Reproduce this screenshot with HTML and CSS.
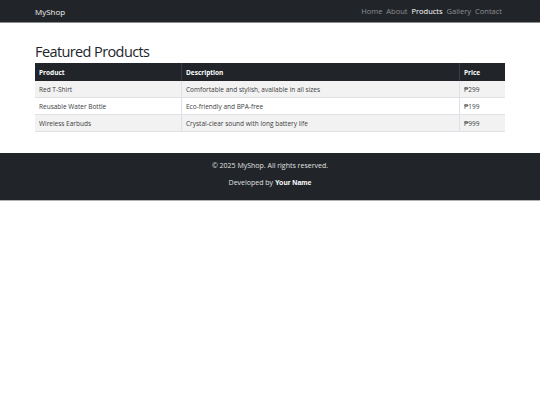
FILE: index.html
```html
<!DOCTYPE html>
<html>
<head>
    <meta charset="UTF-8"/>
    <title>MyShop - Products</title>
    <link rel="stylesheet" href="styles.css">
</head>
<body>
<header class="navbar">
    <div class="container nav-inner">
        <a href="#" class="brand">MyShop</a>
        <nav class="nav-links">
            <a href="#">Home</a>
            <a href="#">About</a>
            <a href="#" class="active">Products</a>
            <a href="#">Gallery</a>
            <a href="#">Contact</a>
        </nav>
    </div>
</header>

<main class="container main">
    <h1>Featured Products</h1>
    <table class="products">
        <thead>
        <tr>
            <th class="col-product">Product</th>
            <th>Description</th>
            <th class="col-price">Price</th>
        </tr>
        </thead>
        <tbody>
        <tr>
            <td>Red T-Shirt</td>
            <td>Comfortable and stylish, available in all sizes</td>
            <td>₱299</td>
        </tr>
        <tr>
            <td>Reusable Water Bottle</td>
            <td>Eco-friendly and BPA-free</td>
            <td>₱199</td>
        </tr>
        <tr>
            <td>Wireless Earbuds</td>
            <td>Crystal-clear sound with long battery life</td>
            <td>₱999</td>
        </tr>
        </tbody>
    </table>
</main>

<footer class="footer">
    <p>&copy; 2025 MyShop. All rights reserved.</p>
    <p>Developed by <strong>Your Name</strong></p>
</footer>
</body>
</html>
```

FILE: styles.css
```css
body {
    margin: 0;
    font-family: "Open Sans", sans-serif;
    color: #212529;
    background: #fff;
}

.container {
    width: 470px;
    margin: 0 auto;
}

.navbar {
    background: #212529;
    height: 22px;
    border-bottom: 1px solid #8a8c8e;
}

.nav-inner {
    display: flex;
    justify-content: space-between;
    align-items: center;
    height: 100%;
}

.brand {
    color: #f1f1f1;
    text-decoration: none;
    font-size: 8px;
}

.nav-links {
    display: flex;
    gap: 4px;
    margin-right: 3px;
}

.nav-links a {
    color: #8d8f91;
    text-decoration: none;
    font-size: 7.5px;
}

.nav-links a.active {
    color: #fff;
}

.main {
    padding-top: 19px;
    padding-bottom: 21px;
}

h1 {
    font-weight: 400;
    font-size: 14.5px;
    letter-spacing: -0.6px;
    margin: 0 0 1px;
    line-height: 20px;
}

.products {
    width: 100%;
    border-collapse: collapse;
    font-size: 6.5px;
}

.products th,
.products td {
    text-align: left;
    padding: 0 4px;
    height: 16px;
    border-bottom: 1px solid #dee2e6;
}

.products th {
    background: #212529;
    color: #fff;
    font-weight: 700;
    height: 18px;
    border-bottom: none;
}

.products td {
    color: #3a3d40;
}

.products tbody tr:nth-child(odd) td {
    background: #f2f2f2;
}

.products td + td,
.products th + th {
    border-left: 1px solid #dee2e6;
}

.products th + th {
    border-left-color: #3a3e42;
}

.col-product {
    width: 138px;
}

.col-price {
    width: 37px;
}

.footer {
    background: #212529;
    color: #e0e0e0;
    text-align: center;
    font-size: 7px;
    padding: 4px 0 9px;
    border-bottom: 1px solid #b0b2b4;
}

.footer p {
    margin: 0;
    line-height: 17px;
}

.footer strong {
    color: #fff;
    font-family: "Liberation Sans", sans-serif;
}
```
